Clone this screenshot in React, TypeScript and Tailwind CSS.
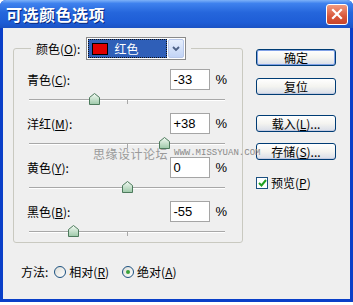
import React from "react";

const cjk = "font-['SimSun','Noto_Sans_CJK_SC',sans-serif]";

const rows = [
  { label: "青色", key: "C", value: "-33", v: -33 },
  { label: "洋红", key: "M", value: "+38", v: 38 },
  { label: "黄色", key: "Y", value: "0", v: 0 },
  { label: "黑色", key: "B", value: "-55", v: -55 },
];

function Thumb() {
  return (
    <svg width="11" height="12" viewBox="0 0 11 12">
      <defs>
        <linearGradient id="tg" x1="0" y1="0" x2="0" y2="1">
          <stop offset="0" stopColor="#f4fbf4" />
          <stop offset="1" stopColor="#9cc8a8" />
        </linearGradient>
      </defs>
      <polygon points="5.5,0.5 10.5,4.5 10.5,11.5 0.5,11.5 0.5,4.5" fill="url(#tg)" stroke="#4d7a5c" strokeWidth="1" />
    </svg>
  );
}

function Slider({ v }: { v: number }) {
  // track runs 29..225 in page coords; group inner starts at 14
  const left = 15 + 98 + (v / 100) * 98 - 5.5;
  return (
    <div className="relative h-[20px]">
      <div className="absolute left-[15px] top-[9px] w-[196px] h-[2px] border-t border-[#a8a8a8] border-b border-b-white" />
      <div className="absolute left-[113px] top-[10px] w-px h-[4px] bg-[#a8a8a8]" />
      <div className="absolute top-[3px]" style={{ left }}>
        <Thumb />
      </div>
    </div>
  );
}

function XpButton({ children, def }: { children: React.ReactNode; def?: boolean }) {
  return (
    <button
      className={
        "w-[80px] h-[17px] rounded-[3px] border border-[#003c74] bg-[linear-gradient(180deg,#ffffff_0%,#f4f4f0_50%,#d8dde8_100%)] text-[12px] leading-[14px] text-black flex items-center justify-center " +
        cjk +
        (def ? " shadow-[inset_0_0_0_1px_#7fa0e6]" : " shadow-[inset_0_-1px_0_#c4cbe0]")
      }
    >
      {children}
    </button>
  );
}

function Radio({ checked }: { checked?: boolean }) {
  return (
    <span className="w-[12px] h-[12px] rounded-full border border-[#1c5180] bg-[linear-gradient(135deg,#dcdcd6,#ffffff)] flex items-center justify-center">
      {checked && <span className="w-[4px] h-[4px] rounded-full bg-[#3aa23a]" />}
    </span>
  );
}

export default function App() {
  return (
    <div className="w-[353px] h-[305px] bg-white overflow-hidden">
      <div className="w-[353px] h-[302px] flex flex-col bg-[#0a3fc8] rounded-t-[6px] overflow-hidden">
        {/* title bar */}
        <div className="h-[28px] flex items-center justify-between pl-[6px] pr-[5px] bg-[linear-gradient(180deg,#7eb2f8_0%,#3f82ee_12%,#2566dc_45%,#1e5dd6_80%,#1b52c4_100%)]">
          <span className={"text-white text-[16px] font-bold tracking-[0.5px] [text-shadow:1px_1px_0_#0a2a80] " + cjk}>
            可选颜色选项
          </span>
          <span className="w-[22px] h-[21px] rounded-[3px] border border-white bg-[linear-gradient(180deg,#f19a80,#d9573a_60%,#c8452a)] flex items-center justify-center">
            <svg width="12" height="12" viewBox="0 0 12 12">
              <path d="M2 2 L10 10 M10 2 L2 10" stroke="white" strokeWidth="2.2" strokeLinecap="square" />
            </svg>
          </span>
        </div>

        {/* body */}
        <div className="flex-1 mx-[3px] mb-[3px] bg-[#efefef] relative">
          <div className="flex">
            <div className="pl-[10px]">
              <fieldset className="mt-[9px] w-[230px] border border-[#c9c9c0] rounded-[3px] px-0 pb-0">
                <legend className="ml-[17px] px-[5px]">
                  <div className="flex items-center h-[23px]">
                    <span className={"text-[12px] text-black " + cjk}>
                      颜色(<u>O</u>):
                    </span>
                    <div className="ml-[6px] w-[100px] h-[23px] border border-[#8a8a8a] bg-white flex items-stretch p-[1px]">
                      <div className="flex-1 bg-[#2f5fb8] outline-1 outline-dotted outline-[#111] -outline-offset-1 flex items-center pl-[4px]">
                        <span className="w-[16px] h-[12px] bg-[#e00000] border border-black" />
                        <span className={"ml-[6px] text-white text-[12px] " + cjk}>红色</span>
                      </div>
                      <div className="ml-[1px] w-[16px] rounded-[2px] border border-[#b8c8ea] bg-[linear-gradient(180deg,#e6eefc,#c2d4f6)] flex items-center justify-center">
                        <svg width="8" height="6" viewBox="0 0 8 6">
                          <path d="M1 1 L4 4 L7 1" stroke="#4d6185" strokeWidth="1.8" fill="none" />
                        </svg>
                      </div>
                    </div>
                  </div>
                </legend>

                {rows.map((r, i) => (
                  <div key={r.key} className={i === 0 ? "mt-[9px]" : "mt-[3px]"}>
                    <div className="flex items-center h-[21px] pl-[13px]">
                      <span className={"text-[12px] text-black " + cjk}>
                        {r.label}(<u>{r.key}</u>):
                      </span>
                      <div className="ml-auto w-[40px] h-[21px] border border-[#a5a5a5] bg-white flex items-center pl-[2px] text-[13px] font-['Liberation_Sans',sans-serif] text-black">
                        {r.value}
                      </div>
                      <span className="ml-[5px] mr-[15px] text-[13px] font-['Liberation_Sans',sans-serif] text-black">%</span>
                    </div>
                    <Slider v={r.v} />
                  </div>
                ))}
              </fieldset>

              <div className={"mt-[21px] pl-[8px] flex items-center h-[16px] text-[12px] text-black " + cjk}>
                <span>方法:</span>
                <span className="ml-[6px]">
                  <Radio />
                </span>
                <span className="ml-[3px]">
                  相对(<u>R</u>)
                </span>
                <span className="ml-[13px]">
                  <Radio checked />
                </span>
                <span className="ml-[3px]">
                  绝对(<u>A</u>)
                </span>
              </div>
            </div>

            <div className="ml-[13px] pt-[21px] flex flex-col">
              <XpButton def>确定</XpButton>
              <div className="mt-[12px]">
                <XpButton>复位</XpButton>
              </div>
              <div className="mt-[20px]">
                <XpButton>
                  载入(<u>L</u>)...
                </XpButton>
              </div>
              <div className="mt-[11px]">
                <XpButton>
                  存储(<u>S</u>)...
                </XpButton>
              </div>
              <div className={"mt-[14px] flex items-center text-[12px] text-black " + cjk}>
                <span className="w-[12px] h-[12px] border border-[#1c5180] bg-white flex items-center justify-center">
                  <svg width="9" height="8" viewBox="0 0 9 8">
                    <path d="M1 4 L3.5 6.5 L8 1" stroke="#21a121" strokeWidth="2" fill="none" />
                  </svg>
                </span>
                <span className="ml-[3px]">
                  预览(<u>P</u>)
                </span>
              </div>
            </div>
          </div>

          {/* watermark */}
          <div className="absolute left-[90px] top-[117px] flex items-center pointer-events-none">
            <span className={"text-[12px] text-[#9a9a9a] tracking-[0.5px] " + cjk}>思缘设计论坛</span>
            <span className="ml-[6px] text-[9px] text-[#8a8a8a] font-['Liberation_Mono',monospace]">WWW.MISSYUAN.COM</span>
          </div>
        </div>
      </div>
    </div>
  );
}
